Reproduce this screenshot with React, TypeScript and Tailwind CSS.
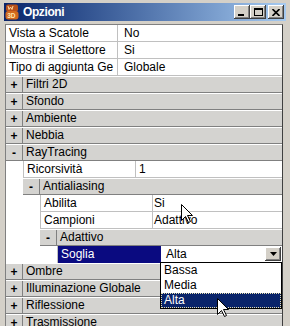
const indentW = ['w-0', 'w-[17px]', 'w-[34px]', 'w-[51px]']

function Indent({ level }: { level: number }) {
  return <div className={`${indentW[level]} shrink-0 bg-white`} />
}

function PropRow({
  level,
  name,
  value,
  nameW = 'w-[112px]',
  valuePad = 'pl-[6px]',
}: {
  level: number
  name: string
  value: string
  nameW?: string
  valuePad?: string
}) {
  return (
    <div className="flex h-[17px] shrink-0">
      <Indent level={level} />
      <div className={`flex flex-1 bg-white ${level > 0 ? 'border-l border-[#c0c0c0]' : ''}`}>
        <div className={`${nameW} shrink-0 overflow-hidden whitespace-nowrap border-r border-b border-[#c0c0c0] pl-[3px] leading-[16px]`}>
          {name}
        </div>
        <div className={`flex-1 overflow-hidden whitespace-nowrap border-b border-[#c0c0c0] ${valuePad} leading-[16px]`}>
          {value}
        </div>
      </div>
    </div>
  )
}

function GroupRow({ level, label, open }: { level: number; label: string; open?: boolean }) {
  return (
    <div className="flex h-[17px] shrink-0">
      <Indent level={level} />
      <div className="flex flex-1 bg-[#d4d3d0] border-t border-b border-t-white border-b-[#808080]">
        <div className="w-[17px] shrink-0 border-r border-[#808080] flex items-center justify-center font-bold text-[12px] leading-none">
          {open ? '-' : '+'}
        </div>
        <div className="flex-1 pl-[3px] leading-[15px] whitespace-nowrap overflow-hidden">{label}</div>
      </div>
    </div>
  )
}

function Cursor({ className }: { className: string }) {
  return (
    <svg className={className} width="13" height="20" viewBox="0 0 13 20">
      <path
        d="M0.5 0.5 L0.5 16.5 L4.5 12.5 L7.5 18.5 L9.5 17.5 L6.5 11.5 L11.5 11.5 Z"
        fill="white"
        stroke="black"
        strokeWidth="1"
      />
    </svg>
  )
}

const btn =
  'w-[16px] h-[14px] bg-[#d4d0c8] shadow-[inset_-1px_-1px_#404040,inset_1px_1px_#ffffff,inset_-2px_-2px_#808080] flex items-center justify-center'

export default function App() {
  return (
    <div className="relative w-[290px] h-[326px] overflow-hidden bg-[#d4d0c8] pt-[3px] px-[4px] font-['Liberation_Sans',Arial,sans-serif] text-[12px] text-black">
      {/* title bar */}
      <div className="flex items-center h-[18px] w-[282px] bg-gradient-to-r from-[#0a246a] to-[#a6caf0] pl-[1px] pr-[2px]">
        <svg width="14" height="16" viewBox="0 0 14 16" className="shrink-0">
          <rect x="1" y="0.5" width="12" height="7" rx="2" fill="#b8501a" />
          <rect x="0.5" y="7" width="13" height="8.5" rx="3" fill="#d2691e" />
          <path d="M3 2 L4 5.5 L5.5 3 L7 5.5 L8 2" stroke="#ffd9a0" strokeWidth="1" fill="none" />
          <text x="2.2" y="14" fontSize="6.5" fontWeight="bold" fill="#ffe6b0" fontFamily="Liberation Sans">3D</text>
        </svg>
        <span className="ml-[4px] text-white font-bold text-[12px] tracking-[-0.4px]">Opzioni</span>
        <div className="ml-auto flex items-center">
          <div className={btn}>
            <div className="w-[6px] h-[2px] bg-black mt-[6px] mr-[3px]" />
          </div>
          <div className={btn}>
            <div className="w-[9px] h-[8px] border border-black border-t-2" />
          </div>
          <div className={`${btn} ml-[2px]`}>
            <svg width="8" height="7" viewBox="0 0 8 7">
              <path d="M0.5 0 L7.5 7 M7.5 0 L0.5 7" stroke="black" strokeWidth="1.6" />
            </svg>
          </div>
        </div>
      </div>

      {/* property sheet */}
      <div className="mt-[3px] ml-[1px] w-[278px] flex flex-col border-t border-l border-r border-t-[#808080] border-l-[#808080] border-r-[#404040] bg-white">
        <PropRow level={0} name="Vista a Scatole" value="No" />
        <PropRow level={0} name="Mostra il Selettore" value="Si" />
        <PropRow level={0} name="Tipo di aggiunta Ge" value="Globale" />
        <GroupRow level={0} label="Filtri 2D" />
        <GroupRow level={0} label="Sfondo" />
        <GroupRow level={0} label="Ambiente" />
        <GroupRow level={0} label="Nebbia" />
        <GroupRow level={0} label="RayTracing" open />
        <PropRow level={1} name="Ricorsività" value="1" valuePad="pl-[3px]" />
        <GroupRow level={1} label="Antialiasing" open />
        <PropRow level={2} name="Abilita" value="Si" valuePad="pl-[1px]" />
        <PropRow level={2} name="Campioni" value="Adattivo" valuePad="pl-[1px]" />
        <GroupRow level={2} label="Adattivo" open />
        <div className="flex h-[17px] shrink-0">
          <Indent level={3} />
          <div className="flex flex-1 border-l border-[#c0c0c0] bg-white">
            <div className="w-[103px] shrink-0 bg-[#0a0a80] text-white pl-[3px] leading-[16px]">Soglia</div>
            <div className="flex flex-1 items-center bg-white border-b border-[#404040]">
              <span className="flex-1 pl-[5px] leading-[16px]">Alta</span>
              <div className={`${btn} w-[15px] h-[13px] mr-[1px]`}>
                <svg width="7" height="4" viewBox="0 0 7 4">
                  <path d="M0 0 H7 L3.5 4 Z" fill="black" />
                </svg>
              </div>
            </div>
          </div>
        </div>
        <GroupRow level={0} label="Ombre" />
        <GroupRow level={0} label="Illuminazione Globale" />
        <GroupRow level={0} label="Riflessione" />
        <GroupRow level={0} label="Trasmissione" />
      </div>

      {/* open combo list */}
      <div className="absolute left-[160px] top-[262px] w-[122px] h-[47px] bg-white border border-black flex flex-col">
        <div className="h-[15px] pl-[3px] leading-[15px]">Bassa</div>
        <div className="h-[15px] pl-[3px] leading-[15px]">Media</div>
        <div className="h-[15px] pl-[2px] leading-[13px] bg-[#0a246a] text-white border border-dotted border-[#e8e0b0]">Alta</div>
      </div>

      <Cursor className="absolute left-[181px] top-[204px]" />
      <Cursor className="absolute left-[217px] top-[298px]" />
    </div>
  )
}
